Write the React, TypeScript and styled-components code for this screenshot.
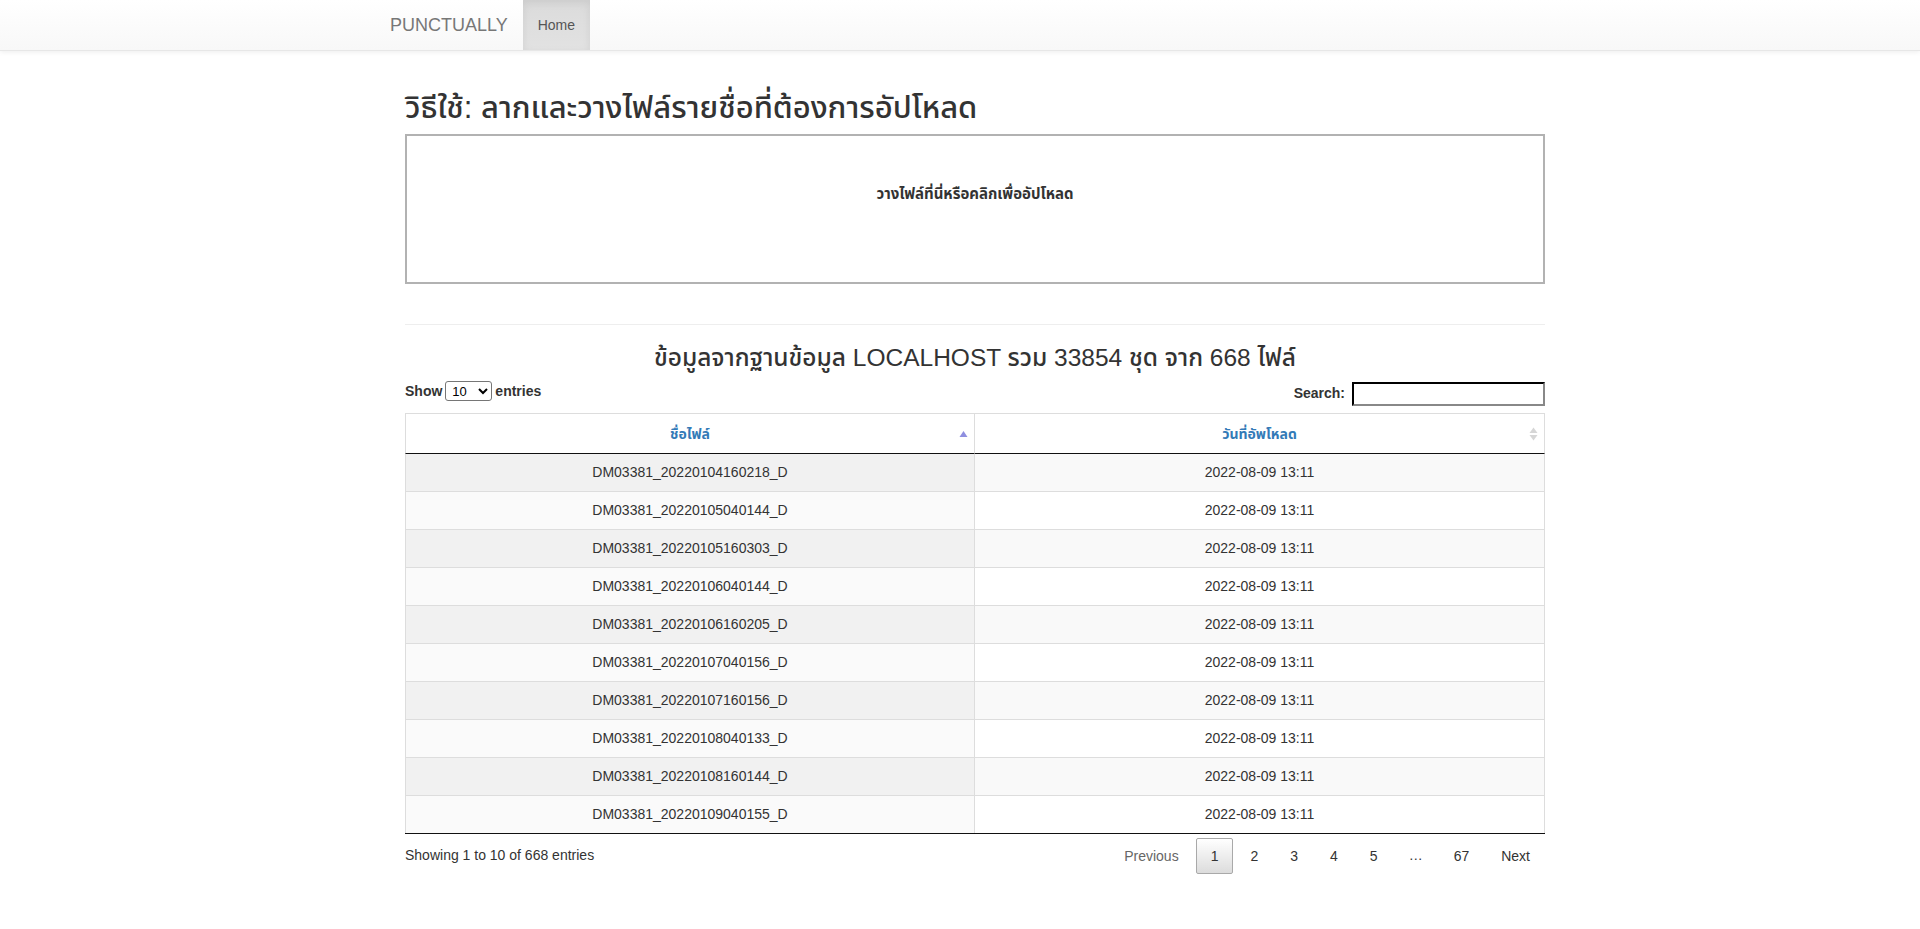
import React from "react";
import styled, { createGlobalStyle } from "styled-components";

const FONT = `"Liberation Sans", "Noto Sans Thai", "Tahoma", "DejaVu Sans", Arial, sans-serif`;

const Global = createGlobalStyle`
  html, body { margin: 0; padding: 0; background: #fff; }
  body {
    font-family: ${FONT};
    font-size: 14px;
    line-height: 1.42857;
    color: #333;
  }
  * { box-sizing: border-box; }
`;

const NavBar = styled.nav`
  height: 51px;
  background: linear-gradient(to bottom, #ffffff 0, #f8f8f8 100%);
  border-bottom: 1px solid #e7e7e7;
  box-shadow: inset 0 1px 0 rgba(255, 255, 255, 0.15), 0 1px 5px rgba(0, 0, 0, 0.075);
`;

const NavInner = styled.div`
  width: 1170px;
  margin: 0 auto;
  padding: 0 15px;
  display: flex;
  align-items: stretch;
  height: 50px;
`;

const Brand = styled.a`
  margin-left: -15px;
  padding: 15px;
  font-size: 18px;
  line-height: 20px;
  color: #777;
  text-decoration: none;
  height: 50px;
`;

const NavItem = styled.a<{ $active?: boolean }>`
  display: block;
  padding: 15px;
  line-height: 20px;
  color: #555;
  text-decoration: none;
  height: 50px;
  background: ${(p) => (p.$active ? "linear-gradient(to bottom, #dbdbdb 0, #e2e2e2 100%)" : "transparent")};
  box-shadow: ${(p) => (p.$active ? "inset 0 3px 9px rgba(0, 0, 0, 0.075)" : "none")};
`;

const Main = styled.main`
  width: 1170px;
  margin: 0 auto;
  padding: 20px 0 0 30px;
`;

const PageTitle = styled.h2`
  font-size: 31px;
  font-weight: 500;
  line-height: 33px;
  margin: 20px 0 10px;
  color: #333;
`;

const DropZone = styled.div`
  height: 150px;
  border: 2px solid rgba(0, 0, 0, 0.3);
  background: #fff;
  padding: 20px;
  cursor: pointer;
`;

const DropMessage = styled.div`
  text-align: center;
  margin-top: 28px;
  font-size: 15px;
  font-weight: 700;
  line-height: 20px;
  color: #333;
`;

const Divider = styled.hr`
  margin: 40px 0 20px;
  border: 0;
  border-top: 1px solid #eee;
  height: 0;
`;

const SectionTitle = styled.h3`
  font-size: 24.5px;
  font-weight: 500;
  line-height: 26.4px;
  margin: 0 0 10px;
  text-align: center;
  color: #333;
`;

const Controls = styled.div`
  display: flex;
  justify-content: space-between;
  align-items: flex-start;
`;

const LengthLabel = styled.label`
  font-weight: 700;
  line-height: 20px;
  display: flex;
  align-items: center;
  gap: 3px;
`;

const LengthSelect = styled.select`
  width: 47px;
  height: 20px;
  font-family: ${FONT};
  font-size: 13px;
  border: 1px solid #767676;
  border-radius: 3px;
  padding: 0 2px;
  background: #fff;
  color: #000;
`;

const FilterLabel = styled.label`
  font-weight: 700;
  display: flex;
  align-items: center;
  gap: 7px;
  margin-top: 1px;
`;

const SearchInput = styled.input`
  height: 24px;
  width: 193px;
  border: 2px inset #767676;
  border-top-color: #333;
  border-left-color: #333;
  border-right-color: #888;
  border-bottom-color: #888;
  font-family: ${FONT};
  font-size: 13px;
  padding: 1px 2px;
  outline: none;
`;

const Table = styled.table`
  width: 100%;
  margin-top: 7px;
  border-collapse: separate;
  border-spacing: 0;
  table-layout: fixed;
  border-bottom: 1px solid #111;
`;

const Th = styled.th<{ $first?: boolean }>`
  position: relative;
  padding: 10px 18px 9px;
  line-height: 20px;
  text-align: center;
  font-weight: 700;
  color: #337ab7;
  border-top: 1px solid #ddd;
  border-right: 1px solid #ddd;
  border-left: ${(p) => (p.$first ? "1px solid #ddd" : "0")};
  border-bottom: 1px solid #111;
  cursor: pointer;
`;

const SortIcon = styled.svg`
  position: absolute;
  right: 6px;
  top: 50%;
  transform: translateY(-50%);
`;

const Td = styled.td<{ $first?: boolean; $firstRow?: boolean; $bg: string }>`
  padding: 8px 10px;
  line-height: 21px;
  text-align: center;
  color: #333;
  background: ${(p) => p.$bg};
  border-top: ${(p) => (p.$firstRow ? "0" : "1px solid #ddd")};
  border-right: 1px solid #ddd;
  border-left: ${(p) => (p.$first ? "1px solid #ddd" : "0")};
`;

const Footer = styled.div`
  display: flex;
  justify-content: space-between;
  align-items: flex-start;
`;

const Info = styled.div`
  padding-top: 10.5px;
  line-height: 20px;
`;

const Paginate = styled.div`
  padding-top: 3.5px;
  display: flex;
  align-items: center;
`;

const PageButton = styled.a<{ $current?: boolean; $disabled?: boolean }>`
  display: inline-block;
  min-width: 1.5em;
  padding: 7px 14px;
  margin-left: 2px;
  line-height: 20px;
  text-align: center;
  text-decoration: none;
  border-radius: 2px;
  cursor: ${(p) => (p.$disabled ? "default" : "pointer")};
  color: ${(p) => (p.$disabled ? "#666" : "#333")};
  border: 1px solid ${(p) => (p.$current ? "#a9a9a9" : "transparent")};
  background: ${(p) =>
    p.$current ? "linear-gradient(to bottom, #ffffff 0%, #dcdcdc 100%)" : "transparent"};
`;

const Ellipsis = styled.span`
  padding: 0 1em;
  margin-left: 2px;
  color: #333;
`;

const files = [
  "DM03381_20220104160218_D",
  "DM03381_20220105040144_D",
  "DM03381_20220105160303_D",
  "DM03381_20220106040144_D",
  "DM03381_20220106160205_D",
  "DM03381_20220107040156_D",
  "DM03381_20220107160156_D",
  "DM03381_20220108040133_D",
  "DM03381_20220108160144_D",
  "DM03381_20220109040155_D",
];

const AscIcon = () => (
  <SortIcon width="9" height="8" viewBox="0 0 9 8">
    <polygon points="4.5,1 8.5,7 0.5,7" fill="#8f8fe0" />
  </SortIcon>
);

const BothIcon = () => (
  <SortIcon width="9" height="14" viewBox="0 0 9 14">
    <polygon points="4.5,0.5 8.5,6 0.5,6" fill="#d6d6d6" />
    <polygon points="0.5,8 8.5,8 4.5,13.5" fill="#d6d6d6" />
  </SortIcon>
);

export default function App() {
  return (
    <>
      <Global />
      <NavBar>
        <NavInner>
          <Brand href="#">PUNCTUALLY</Brand>
          <NavItem href="#" $active>
            Home
          </NavItem>
        </NavInner>
      </NavBar>
      <Main>
        <PageTitle>วิธีใช้: ลากและวางไฟล์รายชื่อที่ต้องการอัปโหลด</PageTitle>
        <DropZone>
          <DropMessage>วางไฟล์ที่นี่หรือคลิกเพื่ออัปโหลด</DropMessage>
        </DropZone>
        <Divider />
        <SectionTitle>ข้อมูลจากฐานข้อมูล LOCALHOST รวม 33854 ชุด จาก 668 ไฟล์</SectionTitle>
        <Controls>
          <LengthLabel>
            Show
            <LengthSelect defaultValue="10">
              <option value="10">10</option>
              <option value="25">25</option>
              <option value="50">50</option>
              <option value="100">100</option>
            </LengthSelect>
            entries
          </LengthLabel>
          <FilterLabel>
            Search:
            <SearchInput type="search" />
          </FilterLabel>
        </Controls>
        <Table>
          <thead>
            <tr>
              <Th $first>
                ชื่อไฟล์
                <AscIcon />
              </Th>
              <Th>
                วันที่อัพโหลด
                <BothIcon />
              </Th>
            </tr>
          </thead>
          <tbody>
            {files.map((f, i) => {
              const odd = i % 2 === 0;
              return (
                <tr key={f}>
                  <Td $first $firstRow={i === 0} $bg={odd ? "#f1f1f1" : "#fafafa"}>
                    {f}
                  </Td>
                  <Td $firstRow={i === 0} $bg={odd ? "#f9f9f9" : "#ffffff"}>
                    2022-08-09 13:11
                  </Td>
                </tr>
              );
            })}
          </tbody>
        </Table>
        <Footer>
          <Info>Showing 1 to 10 of 668 entries</Info>
          <Paginate>
            <PageButton $disabled>Previous</PageButton>
            <PageButton $current>1</PageButton>
            <PageButton>2</PageButton>
            <PageButton>3</PageButton>
            <PageButton>4</PageButton>
            <PageButton>5</PageButton>
            <Ellipsis>…</Ellipsis>
            <PageButton>67</PageButton>
            <PageButton>Next</PageButton>
          </Paginate>
        </Footer>
      </Main>
    </>
  );
}
